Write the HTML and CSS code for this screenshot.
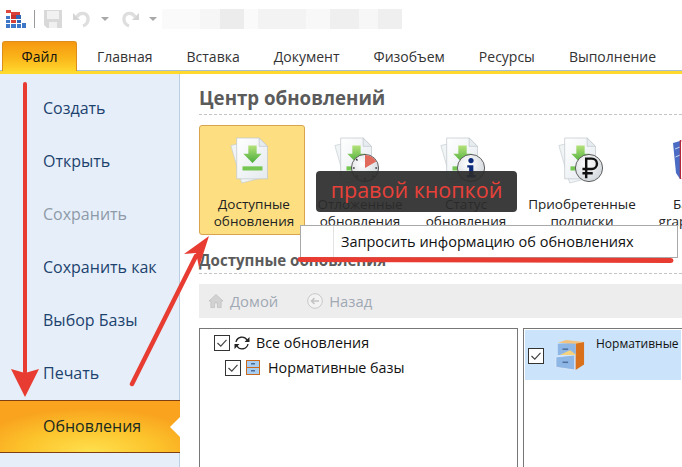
FILE: index.html
```html
<!DOCTYPE html>
<html lang="ru">
<head>
<meta charset="utf-8">
<title>Центр обновлений</title>
<link rel="stylesheet" href="styles.css">
</head>
<body>
<svg class="defs" width="0" height="0">
  <defs>
    <linearGradient id="grn" x1="0" y1="0" x2="0" y2="1"><stop offset="0" stop-color="#b4e27a"/><stop offset="1" stop-color="#4aad3a"/></linearGradient>
    <linearGradient id="pg" x1="0" y1="0" x2="1" y2="1"><stop offset="0" stop-color="#ffffff"/><stop offset="1" stop-color="#e4eaee"/></linearGradient>
    <radialGradient id="disc" cx=".4" cy=".35" r=".75"><stop offset="0" stop-color="#ffffff"/><stop offset="1" stop-color="#cdd3d8"/></radialGradient>
    <symbol id="doc" viewBox="0 0 48 56">
      <path d="M1 10 L31 3 L45 47 L14 55 Z" fill="#f1f4f5" stroke="#c4cbd0" stroke-width=".8"/>
      <path d="M8 1 H35 L45 11 V50 H8 Z" fill="url(#pg)" stroke="#bcc4ca" stroke-width=".8"/>
      <path d="M35 1 V11 H45 Z" fill="#e6ecef" stroke="#bcc4ca" stroke-width=".8"/>
      <path d="M22 10 H32 V20 H38 L27 31 L16 20 H22 Z" fill="url(#grn)"/>
      <rect x="15" y="35" width="24" height="5" fill="#76c653"/>
    </symbol>
    <symbol id="cab" viewBox="0 0 32 36">
      <path d="M22 5 L31 4 V28 L22 34 Z" fill="#d9701c"/>
      <path d="M3 6 L22 5 V18 L3 18 Z" fill="#8fb7e6"/>
      <path d="M3 5 L12 2 L31 4 L22 6 Z" fill="#f3c27c"/>
      <path d="M1 20 L21 18 V34 L1 31 Z" fill="#8fb7e6" stroke="#e9f1fb" stroke-width=".7"/>
      <path d="M5 18 L16 13 L23 18 Z" fill="#f5d27d"/>
      <rect x="8" y="11" width="6" height="1.600" fill="#50709c"/>
      <rect x="8" y="25" width="6" height="1.600" fill="#50709c"/>
    </symbol>
    <symbol id="tick" viewBox="0 0 16 16">
      <rect x=".5" y=".5" width="15" height="15" fill="#fff" stroke="#333"/>
      <path d="M3.500 8 L6.800 11.200 L12.500 4.800" fill="none" stroke="#444" stroke-width="1.200"/>
    </symbol>
  </defs>
</svg>

<div class="app">
  <header class="qat">
    <svg class="qat-logo" width="20" height="18" viewBox="0 0 20 18">
      <rect x="0" y="0" width="5" height="3" fill="#e0483e"/>
      <rect x="5" y="2" width="9" height="3" fill="#d8413a"/>
      <rect x="5" y="5" width="5" height="4" fill="#c8322c"/><rect x="10" y="5" width="5" height="4" fill="#2f66b5"/>
      <rect x="0" y="6" width="4" height="3" fill="#3d78c8"/>
      <rect x="0" y="10" width="4" height="3" fill="#3d78c8"/><rect x="5" y="10" width="5" height="3" fill="#d8413a"/><rect x="11" y="10" width="4" height="3" fill="#2f66b5"/>
      <rect x="0" y="14" width="4" height="4" fill="#3d78c8"/><rect x="5" y="14" width="5" height="4" fill="#3d78c8"/><rect x="11" y="14" width="4" height="4" fill="#3d78c8"/><rect x="16" y="13" width="4" height="5" fill="#3d78c8"/>
    </svg>
    <span class="qat-sep"></span>
    <svg class="qat-save" width="18" height="18" viewBox="0 0 18 18">
      <path d="M0 0 H18 V18 H3 L0 15 Z" fill="#d9d9d9"/>
      <rect x="3" y="1" width="12" height="8" fill="#f1f1f1"/>
      <rect x="5" y="12" width="8" height="6" fill="#f0f0f0"/>
    </svg>
    <svg class="qat-undo" width="18" height="18" viewBox="0 0 18 18">
      <path d="M4 7 C6 2 14 2 15 8 C15.600 12 13 15 10 16" fill="none" stroke="#dedede" stroke-width="3.400"/>
      <path d="M0 3 L7 10 L0 10 Z" fill="#d4d4d4"/>
    </svg>
    <span class="qat-caret"></span>
    <svg class="qat-redo" width="18" height="18" viewBox="0 0 18 18">
      <path d="M14 7 C12 2 4 2 3 8 C2.400 12 5 15 8 16" fill="none" stroke="#dedede" stroke-width="3.400"/>
      <path d="M18 3 L11 10 L18 10 Z" fill="#d4d4d4"/>
    </svg>
    <span class="qat-caret"></span>
    <span class="qat-blur"></span>
  </header>

  <nav class="tabs">
    <span class="tab tab-file">Файл</span>
    <span class="tab">Главная</span>
    <span class="tab">Вставка</span>
    <span class="tab">Документ</span>
    <span class="tab">Физобъем</span>
    <span class="tab">Ресурсы</span>
    <span class="tab">Выполнение</span>
  </nav>

  <div class="stage">
    <aside class="side">
      <div class="side-item">Создать</div>
      <div class="side-item">Открыть</div>
      <div class="side-item side-off">Сохранить</div>
      <div class="side-item">Сохранить как</div>
      <div class="side-item">Выбор Базы</div>
      <div class="side-item">Печать</div>
      <div class="side-item side-on">Обновления</div>
    </aside>

    <main class="main">
      <h1 class="h1">Центр обновлений</h1>
      <div class="bigs">
        <div class="big big-on">
          <span class="big-ico-wrap big-ico-first">
            <svg class="big-ico" width="40" height="47"><use href="#doc"/></svg>
          </span>
          <span class="big-txt">Доступные<br>обновления</span>
        </div>
        <div class="big">
          <span class="big-ico-wrap">
            <svg class="big-ico" width="40" height="47"><use href="#doc"/></svg>
            <svg class="badge" width="30" height="30" viewBox="0 0 32 32">
              <circle cx="16" cy="16" r="14.500" fill="url(#disc)" stroke="#555"/>
              <path d="M16 16 V2 A14 14 0 0 1 28 9 Z" fill="#e06a5c"/>
              <g stroke="#333" stroke-width="1.500">
                <path d="M16 27 V29"/><path d="M5 16 H3"/><path d="M27 16 H29"/><path d="M8 24 L6.500 25.500"/><path d="M24 24 L25.500 25.500"/><path d="M8 8 L6.500 6.500"/>
              </g>
            </svg>
          </span>
          <span class="big-txt">Отложенные<br>обновления</span>
        </div>
        <div class="big">
          <span class="big-ico-wrap">
            <svg class="big-ico" width="40" height="47"><use href="#doc"/></svg>
            <svg class="badge" width="30" height="30" viewBox="0 0 32 32">
              <circle cx="16" cy="16" r="14.500" fill="url(#disc)" stroke="#555"/>
              <circle cx="16" cy="8" r="2.800" fill="#0d2c7c"/>
              <path d="M12 13 H18.500 V23.500 H21 V26 H11.500 V23.500 H14 V15.500 H12 Z" fill="#0d2c7c"/>
            </svg>
          </span>
          <span class="big-txt">Статус<br>обновления</span>
        </div>
        <div class="big big-wide">
          <span class="big-ico-wrap">
            <svg class="big-ico" width="40" height="47"><use href="#doc"/></svg>
            <svg class="badge" width="30" height="30" viewBox="0 0 32 32">
              <circle cx="16" cy="16" r="14.500" fill="url(#disc)" stroke="#555"/>
              <path d="M13 27 V6 H19 A5.500 5.500 0 0 1 19 17 H9 M9 21.500 H20" fill="none" stroke="#111" stroke-width="2.600"/>
            </svg>
          </span>
          <span class="big-txt">Приобретенные<br>подписки</span>
        </div>
        <div class="big big-last">
          <span class="big-ico-wrap big-ico-fan">
            <svg class="big-ico" width="40" height="47" viewBox="0 0 40 47">
              <path d="M0 6 L7 4 V42 L3 36 Z" fill="#4a6cc4"/>
              <path d="M2 12 L7 10 M2.500 20 L7 18" stroke="#c9d6f0" stroke-width="1"/>
              <path d="M7.500 3 V42" stroke="#b3263a" stroke-width="1.500"/>
              <path d="M8 5 H40 V41 H8 Z" fill="#fff"/>
            </svg>
          </span>
          <span class="big-txt">Базовые<br>graphics data</span>
        </div>
      </div>

      <h2 class="h2">Доступные обновления</h2>

      <div class="navbar">
        <span class="nav-btn">
          <svg width="16" height="16" viewBox="0 0 17 16"><path d="M8.500 1 L16 8 H14 V15 H10 V10 H7 V15 H3 V8 H1 Z" fill="#d2d2d2" stroke="#b5b5b5" stroke-width=".6"/></svg>
          Домой
        </span>
        <span class="nav-btn">
          <svg width="16" height="16" viewBox="0 0 16 16"><circle cx="8" cy="8" r="7.300" fill="#f3f3f3" stroke="#c8c8c8"/><path d="M12 8 H5 M7.500 5 L4.500 8 L7.500 11" fill="none" stroke="#c4c4c4" stroke-width="1.600"/></svg>
          Назад
        </span>
      </div>

      <div class="panes">
        <div class="pane pane-tree">
          <div class="node node-a">
            <svg class="chk" width="16" height="16"><use href="#tick"/></svg>
            <svg class="ref" width="16" height="16" viewBox="0 0 16 16"><path d="M2 7 A6 6 0 0 1 13 5 M14 9 A6 6 0 0 1 3 11" fill="none" stroke="#222" stroke-width="1.300"/><path d="M15.500 2 V7 H10.500 Z M.5 14 V9 H5.500 Z" fill="#222"/></svg>
            Все обновления
          </div>
          <div class="node node-b">
            <svg class="chk" width="16" height="16"><use href="#tick"/></svg>
            <svg class="mini" width="14" height="15" viewBox="0 0 14 15"><rect x=".5" y=".5" width="13" height="14" fill="#a9cdf0" stroke="#c9691e"/><path d="M1 7.500 H13" stroke="#c9691e"/><rect x="5" y="3" width="4" height="1.500" fill="#4c6c98"/><rect x="5" y="10" width="4" height="1.500" fill="#4c6c98"/></svg>
            Нормативные базы
          </div>
        </div>
        <div class="pane pane-list">
          <div class="row">
            <svg class="chk" width="16" height="16"><use href="#tick"/></svg>
            <svg class="row-ico" width="30" height="34"><use href="#cab"/></svg>
            <span class="row-txt">Нормативные базы</span>
          </div>
        </div>
      </div>
    </main>
  </div>

  <div class="menu">
    <span class="menu-gutter"></span>
    <span class="menu-txt">Запросить информацию об обновлениях</span>
  </div>

  <div class="hint">правой кнопкой</div>

  <svg class="marks" width="682" height="467" viewBox="0 0 682 467">
    <path d="M25 84 V372" stroke="#e83c32" stroke-width="4" stroke-linecap="round"/>
    <path d="M11 369 L25 373 L39 369 L25 397 Z" fill="#e83c32"/>
    <path d="M132 384 L196 256" stroke="#e83c32" stroke-width="4.500" stroke-linecap="round"/>
    <path d="M209 236 L199 267 L196 253 L184 254 Z" fill="#e83c32"/>
    <path d="M300 259.500 L671 260.500" stroke="#e83c32" stroke-width="5" stroke-linecap="round"/>
  </svg>
</div>
</body>
</html>
```

FILE: styles.css
```css
* { box-sizing: border-box; }
html, body { margin: 0; padding: 0; }
body { width: 682px; height: 467px; overflow: hidden; background: #fff; font-family: "Open Sans", "Noto Sans", sans-serif; font-size: 14.300px; color: #1a1a1a; }
.defs { position: absolute; }
.app { position: relative; width: 682px; height: 467px; overflow: hidden; display: flex; flex-direction: column; }

.qat { height: 41px; flex: none; display: flex; align-items: center; padding: 0 0 3px 6px; }
.qat-logo { margin-right: 8px; }
.qat-sep { width: 1px; height: 18px; background: #9a9a9a; margin-right: 9px; }
.qat-save { margin-right: 11px; }
.qat-undo { margin-right: 10px; }
.qat-caret { width: 0; height: 0; border-left: 4px solid transparent; border-right: 4px solid transparent; border-top: 4px solid #a8a8a8; margin-right: 12px; }
.qat-redo { margin-right: 10px; }
.qat-blur { width: 240px; height: 20px; margin-left: -7px; background: linear-gradient(90deg, #fafafa 0 16%, #f6f6f6 16% 24%, #ececec 24% 34%, #fafafa 34% 40%, #f3f3f3 40% 60%, #f8f8f8 60% 70%, #efefef 70% 82%, #f7f7f7 82% 90%, #efefef 90% 100%); }

.tabs { height: 30px; flex: none; display: flex; align-items: stretch; padding-left: 2px; border-bottom: 1px solid #a9bfd4; font-size: 14px; }
.tab { display: flex; align-items: center; padding: 1px 17px 0; white-space: nowrap; color: #333; }
.tab-file { width: 75px; justify-content: center; padding: 0; margin-right: 3px; margin-bottom: -1px; color: #111; background: linear-gradient(#f59810, #fbb91b 60%, #ffd62c); border: 1px solid #dd8d1c; border-bottom: 0; border-radius: 3px 3px 0 0; }

.stage { flex: 1; min-height: 0; display: flex; border-top: 3px solid #ffd92e; }

.side { width: 180px; flex: none; padding-top: 8px; background: #e6eff9; border-right: 1px solid #bccfe2; }
.side-item { height: 53px; display: flex; align-items: center; padding: 0 0 2px 43px; font-size: 16px; color: #1d426e; }
.side-off { color: #8e9aa8; }
.side-on { position: relative; color: #1a2a20; background: radial-gradient(ellipse 120px 44px at 50% 100%, #ffe04e, #fcc42c 55%, #f9a31e 100%); border-top: 1px solid #7f3f10; border-bottom: 1px solid #7f3f10; margin-right: -1px; }
.side-on::after { content: ""; position: absolute; right: 0; top: 16px; border: 10px solid transparent; border-right-color: #fff; border-left-width: 0; }

.main { flex: 1; min-width: 0; padding-left: 19px; }
.h1 { margin: 0; height: 41px; padding-top: 12px; font-size: 18.700px; line-height: 24px; font-weight: 700; color: #5b5b5b; border-bottom: 1px dashed #c4c4c4; }
.bigs { display: flex; margin-top: 10px; height: 110px; }
.big { width: 106px; flex: none; height: 110px; display: flex; flex-direction: column; align-items: center; padding-top: 11px; text-align: center; border: 1px solid transparent; font-size: 13.500px; line-height: 17px; color: #222; }
.big-on { background: #fddf81; border-color: #d9a44e; border-radius: 3px; }
.big-wide { width: 130px; }
.big-last { width: 104px; }
.big-ico { display: block; }
.big-ico-wrap { position: relative; display: block; width: 48px; height: 47px; }
.big-ico-first { width: 44px; }
.big-ico-fan { margin-right: 4px; }
.badge { position: absolute; left: 16px; top: 16px; }
.big-txt { margin: 12px 0 0 4px; white-space: nowrap; }
.big-wide .big-txt { margin-left: 0; }

.h2 { margin: 14px 0 0; height: 25px; font-size: 15.100px; line-height: 22px; font-weight: 700; color: #5b5b5b; border-bottom: 1px dashed #c4c4c4; }
.navbar { margin-top: 10px; height: 34px; background: #eeeded; display: flex; align-items: center; gap: 29px; padding-left: 9px; }
.nav-btn { display: flex; align-items: center; gap: 6px; font-size: 14.800px; color: #9fa9b4; }

.panes { margin-top: 10px; display: flex; gap: 5px; height: 200px; }
.pane { border: 1px solid #777; }
.pane-tree { width: 319px; flex: none; padding-top: 1px; }
.pane-list { flex: 1; min-width: 0; border-right: 0; padding: 1px; }
.node { height: 25px; display: flex; align-items: center; white-space: nowrap; color: #111; }
.node-a { padding-left: 14px; }
.node-b { padding-left: 25px; }
.chk { flex: none; }
.ref { margin: 0 6px 0 4px; flex: none; }
.mini { margin: 0 8px 0 5px; flex: none; }
.row { height: 50px; background: #cbe4fb; display: flex; align-items: flex-start; position: relative; }
.row > .chk { margin: 18px 0 0 3px; }
.row-ico { margin: 8px 0 0 11px; flex: none; }
.row-txt { margin: 5px 0 0 11px; white-space: nowrap; font-size: 12px; color: #111; }

.menu { position: absolute; left: 300px; top: 225px; width: 378px; height: 33px; background: #fff; border: 1px solid #a9a9a9; display: flex; align-items: stretch; }
.menu-gutter { width: 33px; border-right: 1px solid #e2e2e2; flex: none; }
.menu-txt { display: flex; align-items: center; padding-left: 7px; font-size: 14.500px; color: #111; white-space: nowrap; }

.hint { position: absolute; left: 316px; top: 171px; width: 201px; height: 41px; border-radius: 4px; background: rgba(43, 43, 43, .92); color: #e8413a; font-size: 21.500px; text-align: center; line-height: 38px; }

.marks { position: absolute; left: 0; top: 0; pointer-events: none; }
```
